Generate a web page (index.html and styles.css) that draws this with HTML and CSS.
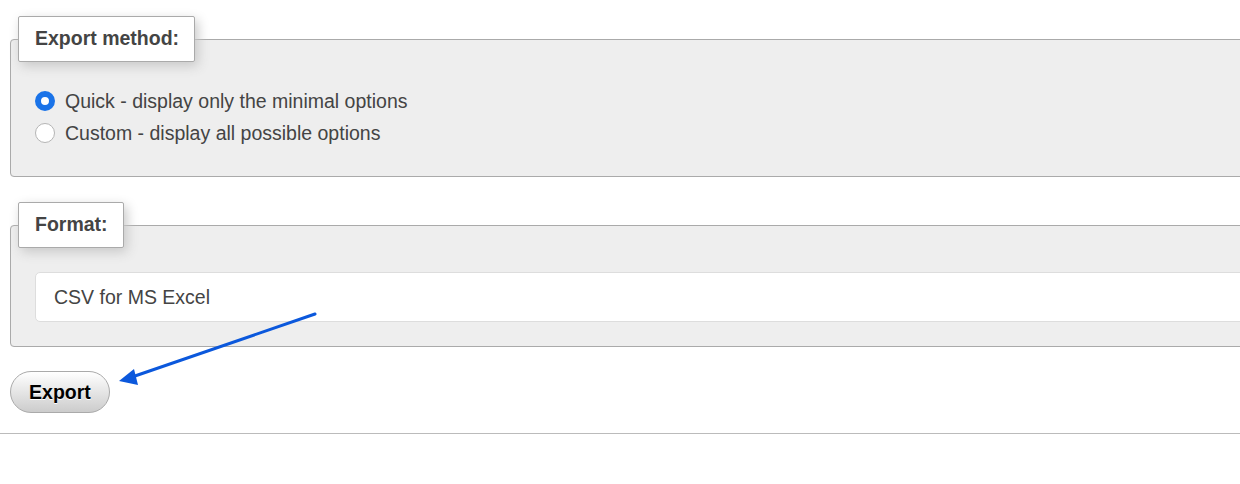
FILE: index.html
```html
<!DOCTYPE html>
<html lang="en">
<head>
    <meta charset="UTF-8">
    <meta name="viewport" content="width=device-width, initial-scale=1.0">
    <title>Export</title>
    <link rel="stylesheet" href="styles.css">
</head>
<body>
    <form class="export-form">
        <fieldset class="group">
            <legend>Export method:</legend>
            <ul class="choices">
                <li>
                    <input type="radio" id="quick" name="method" checked>
                    <label for="quick">Quick - display only the minimal options</label>
                </li>
                <li>
                    <input type="radio" id="custom" name="method">
                    <label for="custom">Custom - display all possible options</label>
                </li>
            </ul>
        </fieldset>

        <fieldset class="group format-group">
            <legend>Format:</legend>
            <select class="format-select">
                <option>CSV for MS Excel</option>
            </select>
        </fieldset>

        <div class="actions">
            <input type="submit" class="btn" value="Export">
        </div>
    </form>
    <hr class="divider">

    <svg class="pointer" width="1240" height="484" viewBox="0 0 1240 484">
        <line x1="315" y1="314" x2="132" y2="377" stroke="#0b58dc" stroke-width="3" stroke-linecap="round"/>
        <polygon points="119,381 134,369 138,385" fill="#0b58dc"/>
    </svg>
</body>
</html>
```

FILE: styles.css
```css
body {
    font-family: "Liberation Sans", Arial, Helvetica, sans-serif;
    font-size: 19.5px;
    color: #444;
    margin: 0;
    padding: 0;
    position: relative;
    overflow: hidden;
}
.export-form {
    padding: 16px 0 0 10px;
    overflow: hidden;
}
.group {
    margin: 0 -200px 25px 0;
    padding: 23px 0 24px 7px;
    background-color: #eee;
    border: 1px solid #aaa;
    border-radius: 4px;
}
.format-group {
    padding-top: 24px;
    margin-bottom: 24px;
}
.group legend {
    font-weight: bold;
    background-color: #fff;
    border: 1px solid #aaa;
    border-radius: 2px;
    padding: 11px 15px 12px 16px;
    line-height: 21px;
    box-shadow: 3px 4px 12px #c8c8c8;
}
.choices {
    list-style: none;
    margin: 0;
    padding: 0 0 3px 17px;
}
.choices li {
    display: flex;
    align-items: center;
    height: 32px;
}
.choices input[type="radio"] {
    appearance: none;
    width: 20px;
    height: 20px;
    margin: 0 10px 0 0;
    border: 1px solid #b5b5b5;
    border-radius: 50%;
    background-color: #fff;
    box-sizing: border-box;
}
.choices input[type="radio"]:checked {
    border: 6px solid #1a73e8;
}
.format-select {
    appearance: none;
    display: block;
    margin-left: 17px;
    width: 1400px;
    height: 50px;
    padding: 0 18px;
    font-family: inherit;
    font-size: 19.5px;
    color: #444;
    background-color: #fff;
    border: 1px solid #ddd;
    border-radius: 5px;
}
.btn {
    font-family: inherit;
    font-size: 19.5px;
    font-weight: bold;
    color: #000;
    width: 100px;
    height: 42px;
    border: 1px solid #aaa;
    border-radius: 21px;
    background: linear-gradient(#fff, #ccc);
    text-shadow: 0 1px 0 #fff;
    cursor: pointer;
}
.divider {
    margin: 20px 0 0;
    border: 0;
    border-top: 1px solid #bbb;
}
.pointer {
    position: absolute;
    top: 0;
    left: 0;
    pointer-events: none;
}
```
